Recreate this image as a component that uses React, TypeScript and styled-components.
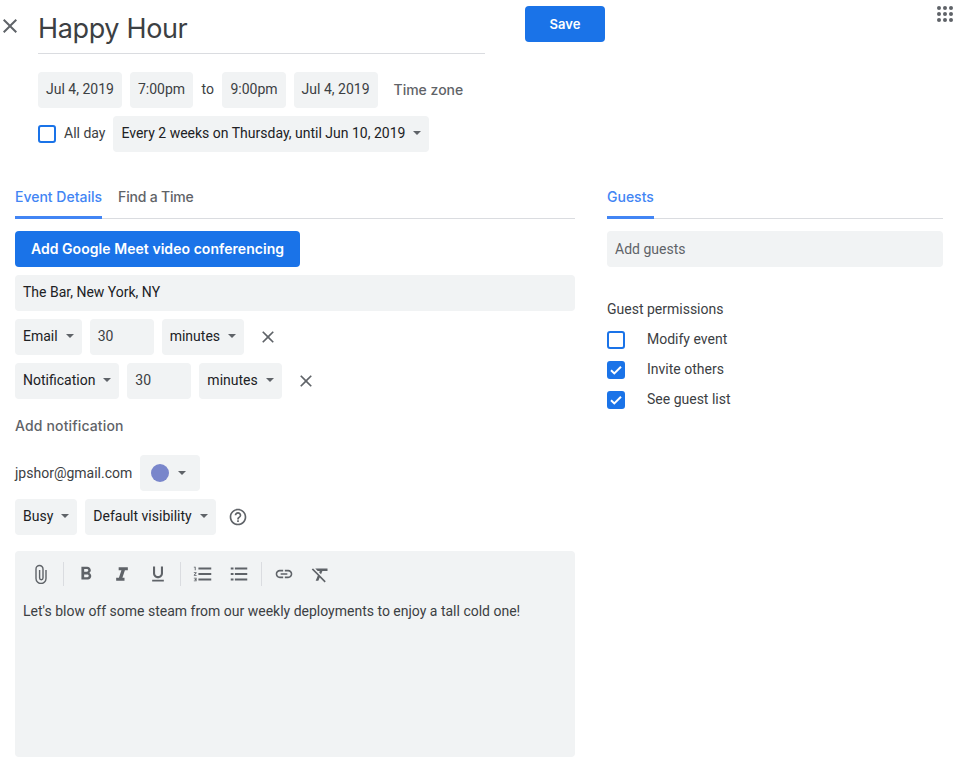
import React from "react";
import styled, { createGlobalStyle } from "styled-components";

const Global = createGlobalStyle`
  html, body { margin: 0; padding: 0; background: #fff; }
  body { font-family: Roboto, "Liberation Sans", sans-serif; font-size: 14px; color: #3c4043; }
`;
const HEAD = `Inter, "Open Sans", sans-serif`;

const Page = styled.div`width: 964px; height: 769px; overflow: hidden; display: flex; flex-direction: column;`;
const Header = styled.header`display: flex; align-items: flex-start; height: 54px; padding-top: 6px; box-sizing: border-box;`;
const CloseSlot = styled.div`width: 38px; height: 40px; margin-left: -2px; margin-right: 2px; display: flex; align-items: center; color: #5f6368;`;
const Title = styled.h1`
  width: 447px; height: 48px; box-sizing: border-box; margin: 0; border-bottom: 1px solid #dadce0;
  font: 400 27px/46px ${HEAD}; letter-spacing: -0.35px; color: #3c4043;
`;
const SaveButton = styled.button`
  width: 80px; height: 36px; margin-left: 40px; border: 0; border-radius: 4px; background: #1a73e8; color: #fff;
  font: 600 13px ${HEAD}; padding: 0 0 1px;
`;
const Apps = styled.svg`margin-left: auto; margin-right: 11px; width: 16px; height: 16px; fill: #5f6368;`;

const DateArea = styled.section`display: flex; flex-direction: column; gap: 8px; padding: 18px 0 0 38px;`;
const Row = styled.div<{ $gap?: number }>`display: flex; align-items: center; gap: ${p => p.$gap ?? 8}px;`;
const Chip = styled.div<{ $w?: number; $dark?: boolean }>`
  height: 36px; box-sizing: border-box; padding: 0 8px 2px; background: #f1f3f4; border-radius: 4px;
  display: flex; align-items: center; justify-content: space-between; white-space: nowrap;
  color: ${p => (p.$dark ? "#202124" : "#3c4043")};
  ${p => (p.$w ? `width: ${p.$w}px;` : "")}
`;
const ColorChip = styled(Chip)`justify-content: flex-start; padding-bottom: 0;`;
const Caret = styled.span`
  display: inline-block; width: 0; height: 0; margin-left: 8px;
  border-left: 4px solid transparent; border-right: 4px solid transparent; border-top: 4px solid #5f6368;
`;
const ToLabel = styled.span`color: #3c4043; white-space: nowrap; padding: 0 0.5px 2px;`;
const TextAction = styled.span`
  font: 500 14px ${HEAD}; color: #5f6368; white-space: nowrap;
`;
const TimeZone = styled(TextAction)`margin-left: 8px; padding-bottom: 2px;`;

const Check = styled.span<{ $on?: boolean }>`
  width: 18px; height: 18px; box-sizing: border-box; border: 2px solid #1a73e8; border-radius: 3px;
  background: ${p => (p.$on ? "#1a73e8" : "#fff")}; display: inline-flex; align-items: center; justify-content: center; flex: none;
`;
const AllDay = styled.label`display: flex; align-items: center; gap: 8px; color: #3c4043; margin-right: 8px; padding-bottom: 2px;`;
const AllDayBox = styled(Check)`margin-top: 2px;`;
const PermBox = styled(Check)`margin-top: 2px;`;

const Columns = styled.main`display: flex; gap: 32px; padding: 28px 21px 0 15px; align-items: flex-start;`;
const LeftCol = styled.div`width: 560px; flex: none; display: flex; flex-direction: column;`;
const RightCol = styled.div`flex: 1; display: flex; flex-direction: column;`;
const Tabs = styled.nav`height: 39px; box-sizing: border-box; display: flex; gap: 16px; border-bottom: 1px solid #dadce0;`;
const Tab = styled.div<{ $on?: boolean }>`
  height: 39px; box-sizing: border-box; font: 500 14px/34px ${HEAD};
  color: ${p => (p.$on ? "#4285f4" : "#5f6368")};
  letter-spacing: ${p => (p.$on ? "0" : "-0.2px")};
  border-bottom: ${p => (p.$on ? "3px solid #4285f4" : "0")};
`;
const Stack = styled.div`display: flex; flex-direction: column; gap: 8px; padding-top: 12px;`;
const PlainStack = styled(Stack)`padding-top: 0;`;
const MeetButton = styled.button`
  align-self: flex-start; width: 285px; height: 36px; border: 0; padding: 0 0 2px; border-radius: 4px;
  background: #1a73e8; color: #fff; font: 600 14px ${HEAD}; letter-spacing: 0.05px;
`;
const Field = styled.div<{ $muted?: boolean }>`
  height: 36px; box-sizing: border-box; padding: 0 8px ${p => (p.$muted ? 0 : 2)}px; display: flex; align-items: center; border-radius: 4px;
  background: #f1f3f4; color: ${p => (p.$muted ? "#5f6368" : "#202124")};
`;
const IconSvg = styled.svg<{ $s?: number; $c?: string }>`
  width: ${p => p.$s ?? 20}px; height: ${p => p.$s ?? 20}px; fill: ${p => p.$c ?? "#5f6368"}; flex: none; display: block;
`;
const ClipSvg = styled.svg`width: 20px; height: 20px; fill: none; stroke: #5f6368; stroke-width: 1.4; flex: none; display: block;`;
const RemoveSlot = styled.span`margin-left: 6px; display: flex;`;
const HelpSlot = styled.span`margin-left: 4px; display: flex;`;
const AddNotif = styled(TextAction)`display: block; margin: 18px 0 20px; line-height: 18px; letter-spacing: 0.15px;`;
const Dot = styled.span`width: 18px; height: 18px; border-radius: 50%; background: #7986cb; flex: none; margin: 0 1px 0 3px;`;
const Email = styled.span`color: #3c4043;`;
const Editor = styled.div`
  margin-top: 16px; height: 206px; background: #f1f3f4; border-radius: 4px; box-sizing: border-box; padding: 0 8px;
`;
const Toolbar = styled.div`display: flex; align-items: center; height: 46px;`;
const ToolIcon = styled.span`width: 36px; display: flex; justify-content: center; flex: none;`;
const Sep = styled.span`width: 1px; height: 24px; margin: 0 4px; background: #dadce0; flex: none;`;
const EditorText = styled.p`margin: 4px 0 0; line-height: 20px; color: #3c4043;`;
const PermTitle = styled.div`margin-top: 32px; line-height: 20px; color: #3c4043;`;
const Perms = styled.div`display: flex; flex-direction: column; gap: 10px; margin-top: 10px;`;
const Perm = styled.label`display: flex; align-items: center; gap: 22px; height: 20px; color: #3c4043;`;

const P = {
  close: "M19 6.41L17.59 5 12 10.59 6.41 5 5 6.41 10.59 12 5 17.59 6.41 19 12 13.41 17.59 19 19 17.59 13.41 12z",
  help: "M11 18h2v-2h-2v2zm1-16C6.48 2 2 6.48 2 12s4.48 10 10 10 10-4.48 10-10S17.52 2 12 2zm0 18c-4.41 0-8-3.59-8-8s3.59-8 8-8 8 3.59 8 8-3.59 8-8 8zm0-14c-2.21 0-4 1.79-4 4h2c0-1.1.9-2 2-2s2 .9 2 2c0 2-3 1.75-3 5h2c0-2.25 3-2.5 3-5 0-2.21-1.79-4-4-4z",
  bold: "M15.6 10.79c.97-.67 1.65-1.77 1.65-2.79 0-2.26-1.75-4-4-4H7v14h7.04c2.09 0 3.71-1.7 3.71-3.79 0-1.52-.86-2.82-2.15-3.42zM10 6.5h3c.83 0 1.5.67 1.5 1.5s-.67 1.5-1.5 1.5h-3v-3zm3.5 9H10v-3h3.5c.83 0 1.5.67 1.5 1.5s-.67 1.5-1.5 1.5z",
  italic: "M8 4h11v3.5h-3.5l-3 9H15V20H5v-3.5h3.3l3-9H8z",
  under: "M12 17c3.31 0 6-2.69 6-6V3h-2.5v8c0 1.93-1.57 3.5-3.5 3.5S8.5 12.93 8.5 11V3H6v8c0 3.31 2.69 6 6 6zm-7 2v2h14v-2H5z",
  ol: "M2 17h2v.5H3v1h1v.5H2v1h3v-4H2v1zm1-9h1V4H2v1h1v3zm-1 3h1.8L2 13.1v.9h3v-1H3.2L5 10.9V10H2v1zm5-6v2h14V5H7zm0 14h14v-2H7v2zm0-6h14v-2H7v2z",
  ul: "M3 5h3v2H3zM3 11h3v2H3zM3 17h3v2H3zM7.5 5H21v2H7.5zM7.5 11H21v2H7.5zM7.5 17H21v2H7.5z",
  link: "M3.9 12c0-1.71 1.39-3.1 3.1-3.1h4V7H7c-2.76 0-5 2.24-5 5s2.24 5 5 5h4v-1.9H7c-1.71 0-3.1-1.39-3.1-3.1zM8 13h8v-2H8v2zm9-6h-4v1.9h4c1.71 0 3.1 1.39 3.1 3.1s-1.39 3.1-3.1 3.1h-4V17h4c2.76 0 5-2.24 5-5s-2.24-5-5-5z",
  clear: "M3.27 5L2 6.27l6.97 6.97L6.5 19h3l1.57-3.66L16.73 21 18 19.73 3.55 5.27 3.27 5zM6 5v.18L8.82 8h2.4l-.72 1.68 2.1 2.1L14.21 8H20V5H6z",
};
const Ico = ({ d, s, c }: { d: string; s?: number; c?: string }) => (
  <IconSvg viewBox="0 0 24 24" $s={s} $c={c}><path d={d} /></IconSvg>
);
const Tick = () => (
  <svg width="14" height="14" viewBox="0 0 14 14"><path d="M2 7.2l3.3 3.2L12 3.8" fill="none" stroke="#fff" strokeWidth="2" /></svg>
);

export default function App() {
  return (
    <Page>
      <Global />
      <Header>
        <CloseSlot><Ico d={P.close} s={24} /></CloseSlot>
        <Title>Happy Hour</Title>
        <SaveButton>Save</SaveButton>
        <Apps viewBox="0 0 16 16">
          {[2, 8, 14].flatMap(y => [2, 8, 14].map(x => <circle key={`${x}-${y}`} cx={x} cy={y} r="2" />))}
        </Apps>
      </Header>
      <DateArea>
        <Row>
          <Chip>Jul 4, 2019</Chip>
          <Chip>7:00pm</Chip>
          <ToLabel>to</ToLabel>
          <Chip>9:00pm</Chip>
          <Chip>Jul 4, 2019</Chip>
          <TimeZone>Time zone</TimeZone>
        </Row>
        <Row $gap={0}>
          <AllDay><AllDayBox />All day</AllDay>
          <Chip $dark>Every 2 weeks on Thursday, until Jun 10, 2019<Caret /></Chip>
        </Row>
      </DateArea>
      <Columns>
        <LeftCol>
          <Tabs>
            <Tab $on>Event Details</Tab>
            <Tab>Find a Time</Tab>
          </Tabs>
          <Stack>
            <MeetButton>Add Google Meet video conferencing</MeetButton>
            <Field>The Bar, New York, NY</Field>
            <Row>
              <Chip $dark>Email<Caret /></Chip>
              <Chip $w={64}>30</Chip>
              <Chip $dark>minutes<Caret /></Chip>
              <RemoveSlot><Ico d={P.close} /></RemoveSlot>
            </Row>
            <Row>
              <Chip $dark>Notification<Caret /></Chip>
              <Chip $w={64}>30</Chip>
              <Chip $dark>minutes<Caret /></Chip>
              <RemoveSlot><Ico d={P.close} /></RemoveSlot>
            </Row>
          </Stack>
          <AddNotif>Add notification</AddNotif>
          <PlainStack>
            <Row>
              <Email>jpshor@gmail.com</Email>
              <ColorChip $w={60}><Dot /><Caret /></ColorChip>
            </Row>
            <Row>
              <Chip $dark>Busy<Caret /></Chip>
              <Chip $dark>Default visibility<Caret /></Chip>
              <HelpSlot><Ico d={P.help} /></HelpSlot>
            </Row>
          </PlainStack>
          <Editor>
            <Toolbar>
              <ToolIcon>
                <ClipSvg viewBox="0 0 20 20">
                  <path d="M15 6v8.5a5 5 0 0 1-10 0V5a3.5 3.5 0 0 1 7 0v9a1.7 1.7 0 0 1-3.4 0V6" />
                </ClipSvg>
              </ToolIcon>
              <Sep />
              <ToolIcon><Ico d={P.bold} s={22} /></ToolIcon>
              <ToolIcon><Ico d={P.italic} /></ToolIcon>
              <ToolIcon><Ico d={P.under} /></ToolIcon>
              <Sep />
              <ToolIcon><Ico d={P.ol} s={22} /></ToolIcon>
              <ToolIcon><Ico d={P.ul} s={22} /></ToolIcon>
              <Sep />
              <ToolIcon><Ico d={P.link} /></ToolIcon>
              <ToolIcon><Ico d={P.clear} s={21} /></ToolIcon>
            </Toolbar>
            <EditorText>Let's blow off some steam from our weekly deployments to enjoy a tall cold one!</EditorText>
          </Editor>
        </LeftCol>
        <RightCol>
          <Tabs><Tab $on>Guests</Tab></Tabs>
          <Stack>
            <Field $muted>Add guests</Field>
          </Stack>
          <PermTitle>Guest permissions</PermTitle>
          <Perms>
            <Perm><PermBox />Modify event</Perm>
            <Perm><PermBox $on><Tick /></PermBox>Invite others</Perm>
            <Perm><PermBox $on><Tick /></PermBox>See guest list</Perm>
          </Perms>
        </RightCol>
      </Columns>
    </Page>
  );
}
